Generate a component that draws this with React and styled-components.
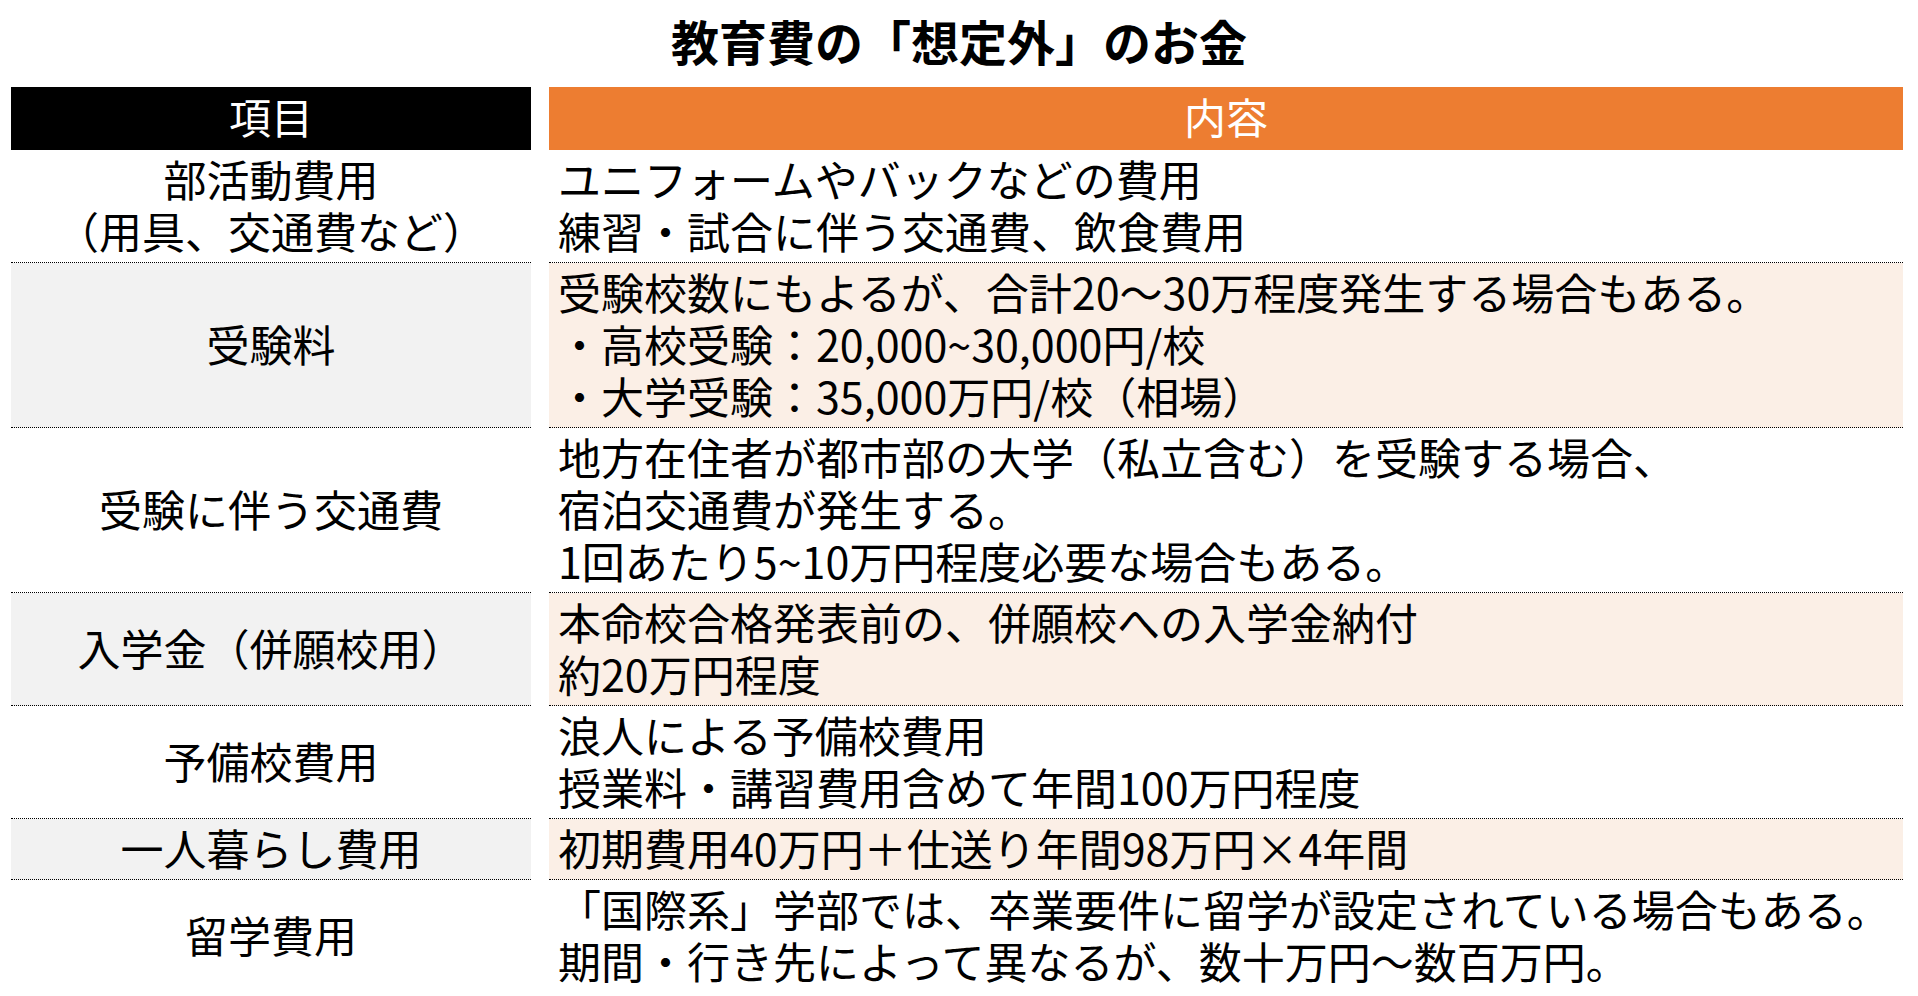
import styled, { createGlobalStyle } from "styled-components";

const GlobalStyle = createGlobalStyle`
  html, body {
    margin: 0;
    padding: 0;
    background: #ffffff;
  }
  body {
    font-family: "Noto Sans CJK JP", "Noto Sans", sans-serif;
    color: #000000;
  }
`;

const rows = [
  {
    item: ["部活動費用", "（用具、交通費など）"],
    detail: ["ユニフォームやバックなどの費用", "練習・試合に伴う交通費、飲食費用"],
  },
  {
    item: ["受験料"],
    detail: [
      "受験校数にもよるが、合計20〜30万程度発生する場合もある。",
      "・高校受験：20,000~30,000円/校",
      "・大学受験：35,000万円/校（相場）",
    ],
    shaded: true,
  },
  {
    item: ["受験に伴う交通費"],
    detail: [
      "地方在住者が都市部の大学（私立含む）を受験する場合、",
      "宿泊交通費が発生する。",
      "1回あたり5~10万円程度必要な場合もある。",
    ],
  },
  {
    item: ["入学金（併願校用）"],
    detail: ["本命校合格発表前の、併願校への入学金納付", "約20万円程度"],
    shaded: true,
  },
  {
    item: ["予備校費用"],
    detail: ["浪人による予備校費用", "授業料・講習費用含めて年間100万円程度"],
  },
  {
    item: ["一人暮らし費用"],
    detail: ["初期費用40万円＋仕送り年間98万円×4年間"],
    shaded: true,
  },
  {
    item: ["留学費用"],
    detail: [
      "「国際系」学部では、卒業要件に留学が設定されている場合もある。",
      "期間・行き先によって異なるが、数十万円〜数百万円。",
    ],
    last: true,
  },
];

function App() {
  return (
    <>
      <GlobalStyle />
      <Page>
        <Title>教育費の「想定外」のお金</Title>
        <Table>
          <Row>
            <HeadCell $tone="dark">項目</HeadCell>
            <HeadCell $tone="orange">内容</HeadCell>
          </Row>
          {rows.map((row, i) => (
            <Row key={i}>
              <ItemCell $shaded={row.shaded} $last={row.last}>
                {row.item.map((line, j) => (
                  <Line key={j}>{line}</Line>
                ))}
              </ItemCell>
              <DetailCell $shaded={row.shaded} $last={row.last}>
                {row.detail.map((line, j) => (
                  <Line key={j}>{line}</Line>
                ))}
              </DetailCell>
            </Row>
          ))}
        </Table>
      </Page>
    </>
  );
}

const Page = styled.div`
  width: 1918px;
  height: 996px;
  overflow: hidden;
`;

const Title = styled.h1`
  margin: 0;
  height: 87px;
  padding-bottom: 8px;
  box-sizing: border-box;
  display: flex;
  align-items: center;
  justify-content: center;
  font-size: 48px;
  font-weight: 700;
  letter-spacing: 0;
`;

const Table = styled.div`
  display: flex;
  flex-direction: column;
  padding-left: 11px;
`;

const Row = styled.div`
  display: grid;
  grid-template-columns: 520px 1354px;
  column-gap: 18px;
`;

const HeadCell = styled.div`
  height: 63px;
  padding-bottom: 5px;
  box-sizing: border-box;
  line-height: 58px;
  text-align: center;
  font-size: 42px;
  color: #ffffff;
  background: ${(p) => (p.$tone === "orange" ? "#ed7d31" : "#000000")};
`;

const Cell = styled.div`
  padding: 2px 9px 6px;
  font-size: 43px;
  line-height: 52px;
  border-bottom: ${(p) => (p.$last ? "none" : "1px dotted #000000")};
  white-space: nowrap;
`;

const ItemCell = styled(Cell)`
  display: flex;
  flex-direction: column;
  align-items: center;
  justify-content: center;
  text-align: center;
  background: ${(p) => (p.$shaded ? "#f2f2f2" : "#ffffff")};
`;

const DetailCell = styled(Cell)`
  background: ${(p) => (p.$shaded ? "#fbefe6" : "#ffffff")};
`;

const Line = styled.div``;

export default App;
